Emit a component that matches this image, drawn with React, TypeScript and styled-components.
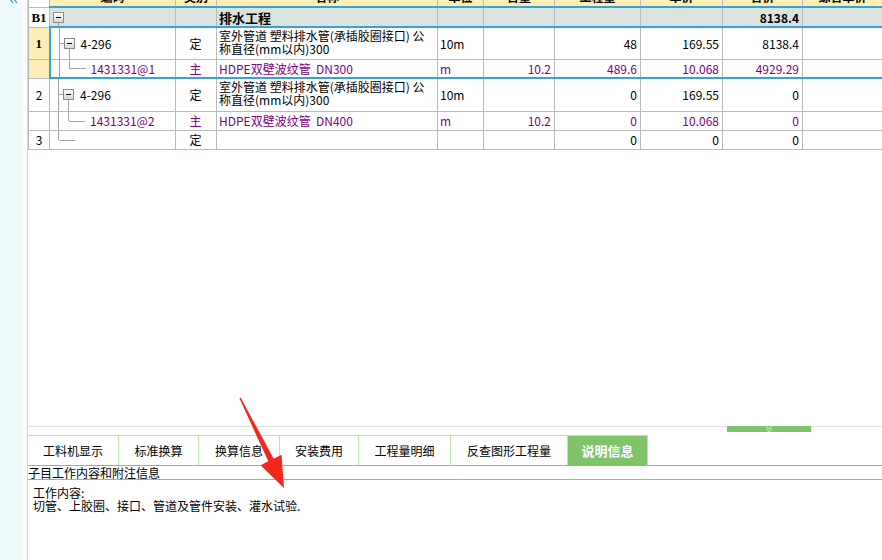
import React from 'react'
import styled, { createGlobalStyle, css } from 'styled-components'

const GlobalStyle = createGlobalStyle`
  html, body {
    margin: 0;
    padding: 0;
    background: #fff;
  }
  body {
    font-family: "Noto Sans CJK SC", "Liberation Sans", sans-serif;
    font-size: 12px;
    color: #000;
  }
`

const BLUE = '#3aa2d2'
const GRID = '#bababa'
const PURPLE = '#800080'
const GREEN = '#80c46a'
const LIGHT_GREEN = '#bfe3ad'

const widths = [21, 126, 41, 221, 46, 71, 86, 82, 80, 80]
const heads = ['', '编码', '类别', '名称', '单位', '含量', '工程量', '单价', '合价', '综合单价']

type Kind = 'group' | 'item' | 'sub' | 'last'

interface RowData {
  kind: Kind
  no: string
  noBold?: boolean
  code?: string
  type: string
  name: React.ReactNode
  unit: string
  nums: string[]
  purple?: boolean
  selTop?: boolean
  selBottom?: boolean
  selected?: boolean
  h: number
}

const pipeName = (
  <>
    室外管道 塑料排水管(承插胶圈接口) 公
    <br />
    称直径(mm以内)300
  </>
)

const rows: RowData[] = [
  { kind: 'item', no: '1', noBold: true, code: '4-296', type: '定', name: pipeName, unit: '10m', nums: ['', '48', '169.55', '8138.4', ''], selected: true, selTop: true, h: 32 },
  { kind: 'sub', no: '', code: '1431331@1', type: '主', name: 'HDPE双壁波纹管  DN300', unit: 'm', nums: ['10.2', '489.6', '10.068', '4929.29', ''], purple: true, selected: true, selBottom: true, h: 19 },
  { kind: 'item', no: '2', code: '4-296', type: '定', name: pipeName, unit: '10m', nums: ['', '0', '169.55', '0', ''], h: 33 },
  { kind: 'sub', no: '', code: '1431331@2', type: '主', name: 'HDPE双壁波纹管  DN400', unit: 'm', nums: ['10.2', '0', '10.068', '0', ''], purple: true, h: 19 },
  { kind: 'last', no: '3', type: '定', name: '', unit: '', nums: ['', '0', '0', '0', ''], h: 19 },
]

const tabs = [
  { label: '工料机显示', w: 91 },
  { label: '标准换算', w: 80 },
  { label: '换算信息', w: 81 },
  { label: '安装费用', w: 79 },
  { label: '工程量明细', w: 92 },
  { label: '反查图形工程量', w: 117 },
  { label: '说明信息', w: 80, active: true },
]

function TreeLines({ kind }: { kind: Kind }) {
  return (
    <LinesSvg>
      {kind === 'group' && <line x1="8.5" y1="50%" x2="8.5" y2="100%" />}
      {kind === 'item' && (
        <>
          <line x1="8.5" y1="0" x2="8.5" y2="100%" />
          <line x1="8.5" y1="50%" x2="13" y2="50%" />
          <line x1="18.5" y1="50%" x2="18.5" y2="100%" />
        </>
      )}
      {kind === 'sub' && (
        <>
          <line x1="8.5" y1="0" x2="8.5" y2="100%" />
          <line x1="18.5" y1="0" x2="18.5" y2="50%" />
          <line x1="18.5" y1="50%" x2="35" y2="50%" />
        </>
      )}
      {kind === 'last' && (
        <>
          <line x1="8.5" y1="0" x2="8.5" y2="50%" />
          <line x1="8.5" y1="50%" x2="25" y2="50%" />
        </>
      )}
    </LinesSvg>
  )
}

export default function App() {
  return (
    <>
      <GlobalStyle />
      <Page>
        <SideStrip>
          <svg width="10" height="5" viewBox="0 0 10 5">
            <path d="M1 -1 L4 3 M5 -1 L8 3" stroke="#3a8fd8" strokeWidth="1.2" fill="none" />
          </svg>
        </SideStrip>
        <Gutter />
        <Main>
          <GridArea>
            <Grid>
              <colgroup>
                {widths.map((w, i) => (
                  <Col key={i} $w={w} />
                ))}
              </colgroup>
              <tbody>
                <Row $h={7}>
                  {heads.map((h, i) => (
                    <HeadCell key={i} $first={i === 0}>
                      <HeadClip>
                        <HeadText>{h}</HeadText>
                      </HeadClip>
                    </HeadCell>
                  ))}
                </Row>
                <Row $h={20}>
                  <NoCell $bold>B1</NoCell>
                  <TreeCell $bt $bb $bg="#dbe3df">
                    <TreeLines kind="group" />
                    <TreeInner $pad={3}>
                      <MinusBox />
                    </TreeInner>
                  </TreeCell>
                  <Cell $bt $bb $bg="#dbe3df" />
                  <Cell $bt $bb $bg="#dbe3df">
                    <GroupTitle>排水工程</GroupTitle>
                  </Cell>
                  <Cell $bt $bb $bg="#dbe3df" />
                  <Cell $bt $bb $bg="#dbe3df" />
                  <Cell $bt $bb $bg="#dbe3df" />
                  <Cell $bt $bb $bg="#dbe3df" />
                  <Cell $bt $bb $bg="#dbe3df" $align="right">
                    <b>8138.4</b>
                  </Cell>
                  <Cell $bt $bb $bg="#dbe3df" />
                </Row>
                {rows.map((r, i) => (
                  <Row key={i} $h={r.h}>
                    <NoCell $bold={r.noBold} $yellow={r.selected}>
                      {r.no}
                    </NoCell>
                    <TreeCell $bl={r.selected} $bt={r.selTop} $bb={r.selBottom}>
                      <TreeLines kind={r.kind} />
                      {r.kind === 'item' && (
                        <TreeInner $pad={13}>
                          <MinusBox />
                          <Code>{r.code}</Code>
                        </TreeInner>
                      )}
                      {r.kind === 'sub' && (
                        <TreeInner $pad={40}>
                          <Code $purple>{r.code}</Code>
                        </TreeInner>
                      )}
                    </TreeCell>
                    <Cell $bt={r.selTop} $bb={r.selBottom} $align="center" $purple={r.purple}>
                      {r.type}
                    </Cell>
                    <Cell
                      $bt={r.selTop}
                      $bb={r.selBottom}
                      $purple={r.purple}
                      $top={r.kind === 'item'}
                      $pre={r.kind === 'sub'}
                    >
                      {r.name}
                    </Cell>
                    <Cell $bt={r.selTop} $bb={r.selBottom} $purple={r.purple}>
                      {r.unit}
                    </Cell>
                    {r.nums.map((n, j) => (
                      <Cell key={j} $bt={r.selTop} $bb={r.selBottom} $align="right" $purple={r.purple}>
                        {n}
                      </Cell>
                    ))}
                  </Row>
                ))}
              </tbody>
            </Grid>
          </GridArea>
          <Splitter>
            <Grip>
              <svg width="10" height="6" viewBox="0 0 10 6">
                <path d="M2 0.5 L5 3 L8 0.5 M2 3 L5 5.5 L8 3" stroke="#d8eecd" strokeWidth="1" fill="none" />
              </svg>
            </Grip>
          </Splitter>
          <TabBar>
            {tabs.map((t) => (
              <Tab key={t.label} $w={t.w} $active={t.active}>
                {t.label}
              </Tab>
            ))}
          </TabBar>
          <PanelTitle>子目工作内容和附注信息</PanelTitle>
          <PanelBody>
            <Para>工作内容:</Para>
            <Para>切管、上胶圈、接口、管道及管件安装、灌水试验.</Para>
          </PanelBody>
        </Main>
        <Annotation width="882" height="560" viewBox="0 0 882 560">
          <polygon
            points="240.6,397.6 273.7,458.7 281.5,454.8 284,488 260.6,465.2 268.3,461.3 239.4,398.3"
            fill="#f2281c"
          />
        </Annotation>
      </Page>
    </>
  )
}

const Page = styled.div`
  position: relative;
  display: flex;
  width: 882px;
  height: 560px;
  overflow: hidden;
`

const SideStrip = styled.div`
  width: 22px;
  flex-shrink: 0;
  background: #effafd;
  display: flex;
  justify-content: flex-end;
  align-items: flex-start;
  padding-right: 3px;
  box-sizing: border-box;
`

const Gutter = styled.div`
  width: 5px;
  flex-shrink: 0;
  background: #fbfbfb;
`

const Main = styled.div`
  flex: 1;
  display: flex;
  flex-direction: column;
  border-left: 1px solid #d4d4d4;
  min-width: 0;
`

const GridArea = styled.div`
  height: 426px;
  overflow: hidden;
  background: #fff;
`

const Grid = styled.table`
  border-collapse: collapse;
  table-layout: fixed;
  width: 854px;
  font-size: 12px;
  line-height: 13px;
`

const Col = styled.col<{ $w: number }>`
  width: ${(p) => p.$w}px;
`

const Row = styled.tr<{ $h: number }>`
  height: ${(p) => p.$h}px;
`

const blueEdges = css<{ $bt?: boolean; $bb?: boolean; $bl?: boolean }>`
  ${(p) => p.$bt && `border-top: 2px solid ${BLUE};`}
  ${(p) => p.$bb && `border-bottom: 2px solid ${BLUE};`}
  ${(p) => p.$bl && `border-left: 2px solid ${BLUE};`}
`

const Cell = styled.td<{
  $align?: 'left' | 'center' | 'right'
  $purple?: boolean
  $bg?: string
  $top?: boolean
  $pre?: boolean
  $bt?: boolean
  $bb?: boolean
  $bl?: boolean
}>`
  border: 1px solid ${GRID};
  padding: 0 3px 0 2px;
  overflow: hidden;
  white-space: ${(p) => (p.$pre ? 'pre' : 'nowrap')};
  text-align: ${(p) => p.$align ?? 'left'};
  vertical-align: ${(p) => (p.$top ? 'top' : 'middle')};
  padding-top: ${(p) => (p.$top ? '1px' : '0')};
  color: ${(p) => (p.$purple ? PURPLE : '#000')};
  background: ${(p) => p.$bg ?? 'transparent'};
  ${blueEdges}
`

const HeadCell = styled.td<{ $first?: boolean }>`
  border: 1px solid ${GRID};
  border-top: none;
  border-bottom: ${(p) => (p.$first ? `1px solid ${GRID}` : `2px solid ${BLUE}`)};
  background: ${(p) => (p.$first ? '#fff' : '#fdeeb5')};
  padding: 0;
  vertical-align: top;
`

const HeadClip = styled.div`
  height: 6px;
  overflow: hidden;
`

const HeadText = styled.div`
  margin-top: -10px;
  text-align: center;
  font-weight: bold;
  font-size: 12px;
  line-height: 13px;
  white-space: nowrap;
`

const NoCell = styled.td<{ $bold?: boolean; $yellow?: boolean }>`
  border: 1px solid ${GRID};
  padding: 0;
  text-align: center;
  background: ${(p) => (p.$yellow ? '#fdeeb7' : '#fff')};
  font-family: ${(p) => (p.$bold ? '"Liberation Serif", serif' : 'inherit')};
  font-weight: ${(p) => (p.$bold ? 'bold' : 'normal')};
  font-size: ${(p) => (p.$bold ? '13px' : '12px')};
`

const TreeCell = styled.td<{ $bt?: boolean; $bb?: boolean; $bl?: boolean; $bg?: string }>`
  position: relative;
  border: 1px solid ${GRID};
  padding: 0;
  overflow: hidden;
  background: ${(p) => p.$bg ?? 'transparent'};
  ${blueEdges}
`

const LinesSvg = styled.svg`
  position: absolute;
  inset: 0;
  width: 100%;
  height: 100%;
  stroke: #a4a4a4;
  stroke-width: 1;
  shape-rendering: crispEdges;
`

const TreeInner = styled.div<{ $pad: number }>`
  position: relative;
  display: flex;
  align-items: center;
  gap: 6px;
  padding-left: ${(p) => p.$pad}px;
`

const MinusBox = styled.span`
  position: relative;
  width: 11px;
  height: 11px;
  box-sizing: border-box;
  border: 1px solid #8a8a8a;
  background: linear-gradient(#ffffff, #d6d6d6);
  flex-shrink: 0;
  &::after {
    content: '';
    position: absolute;
    left: 2px;
    top: 4px;
    width: 5px;
    height: 1px;
    background: #000;
  }
`

const Code = styled.span<{ $purple?: boolean }>`
  color: ${(p) => (p.$purple ? PURPLE : '#000')};
  white-space: nowrap;
`

const GroupTitle = styled.span`
  font-weight: bold;
  font-size: 13px;
`

const Splitter = styled.div`
  height: 9px;
  flex-shrink: 0;
  background: linear-gradient(#e0e0e0, #e0e0e0) top / 100% 1px no-repeat;
`

const Grip = styled.div`
  margin-left: 699px;
  width: 84px;
  height: 6px;
  background: ${GREEN};
  display: flex;
  justify-content: center;
  align-items: flex-start;
`

const TabBar = styled.div`
  display: flex;
  flex-shrink: 0;
  height: 31px;
  border-bottom: 1px solid ${GREEN};
  box-sizing: border-box;
`

const Tab = styled.div<{ $w: number; $active?: boolean }>`
  width: ${(p) => p.$w}px;
  box-sizing: border-box;
  display: flex;
  align-items: center;
  justify-content: center;
  border-top: 1px solid ${LIGHT_GREEN};
  border-right: 1px solid ${LIGHT_GREEN};
  background: ${(p) => (p.$active ? GREEN : '#fff')};
  color: ${(p) => (p.$active ? '#fff' : '#000')};
  font-weight: ${(p) => (p.$active ? 'bold' : 'normal')};
  font-size: ${(p) => (p.$active ? '13px' : '12px')};
`

const PanelTitle = styled.div`
  height: 13px;
  line-height: 13px;
  font-size: 12px;
  white-space: nowrap;
  overflow: hidden;
  border-bottom: 1px solid #a9a9a9;
`

const PanelBody = styled.div`
  flex: 1;
  padding: 6px 0 0 5px;
`

const Para = styled.div`
  font-size: 12px;
  line-height: 13px;
`

const Annotation = styled.svg`
  position: absolute;
  left: 0;
  top: 0;
  pointer-events: none;
`
